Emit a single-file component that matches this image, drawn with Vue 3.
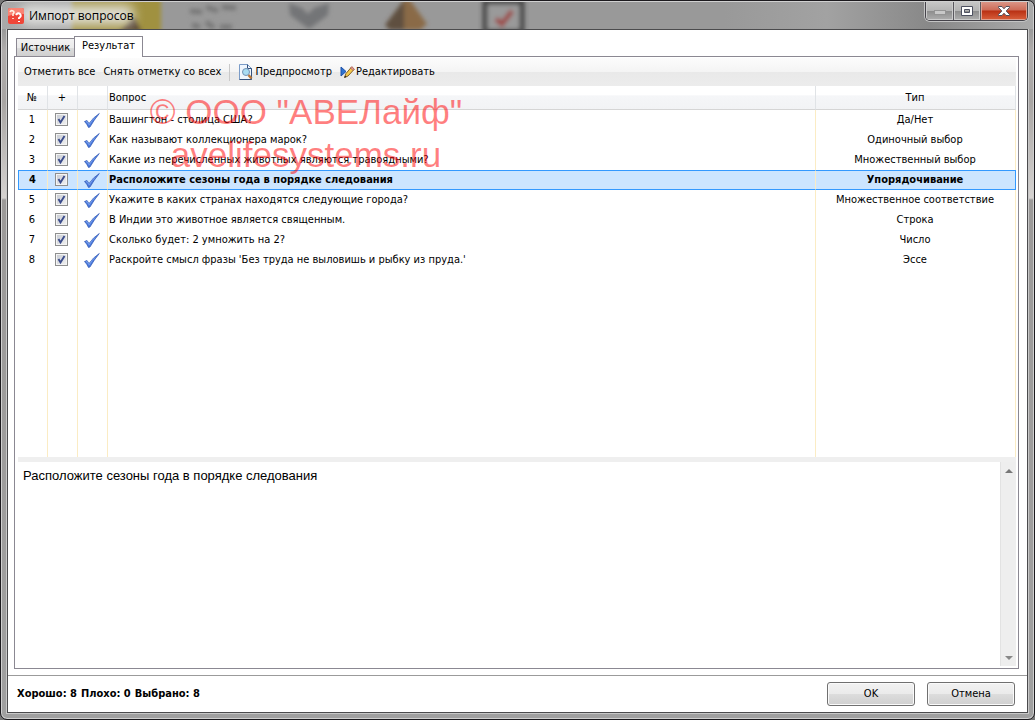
<script setup>
import { ref } from 'vue'

const rows = ref([
  { n: 1, on: true, text: 'Вашингтон - столица США?', type: 'Да/Нет' },
  { n: 2, on: true, text: 'Как называют коллекционера марок?', type: 'Одиночный выбор' },
  { n: 3, on: true, text: 'Какие из перечисленных животных являются травоядными?', type: 'Множественный выбор' },
  { n: 4, on: true, text: 'Расположите сезоны года в порядке следования', type: 'Упорядочивание' },
  { n: 5, on: true, text: 'Укажите в каких странах находятся следующие города?', type: 'Множественное соответствие' },
  { n: 6, on: true, text: 'В Индии это животное является священным.', type: 'Строка' },
  { n: 7, on: true, text: 'Сколько будет: 2 умножить на 2?', type: 'Число' },
  { n: 8, on: true, text: "Раскройте смысл фразы 'Без труда не выловишь и рыбку из пруда.'", type: 'Эссе' },
])
const current = ref(4)
const setAll = (value) => rows.value.forEach((r) => (r.on = value))
const currentText = () => rows.value.find((r) => r.n === current.value).text
</script>

<template>
  <div class="window">
    <header class="titlebar">
      <svg class="glass" width="560" height="27" viewBox="0 0 560 27" aria-hidden="true">
        <defs>
          <filter id="soft" x="-20%" y="-20%" width="140%" height="140%"><feGaussianBlur stdDeviation="2" /></filter>
          <filter id="glow" x="-20%" y="-60%" width="140%" height="220%"><feGaussianBlur stdDeviation="6" /></filter>
        </defs>
        <g filter="url(#soft)">
          <rect x="72" y="-4" width="89" height="36" fill="#a09140" />
          <path d="M118 30 134 14 142 30z" fill="#5c4a34" />
          <path d="M190 9 202 10M206 5 218 9M222 5 236 6M192 23 200 25M206 20 214 26M220 25h12" stroke="#777" stroke-width="5" />
          <path d="M289 1 302 6 308 12 314 6 329 1 328 13 309 27 290 13z" fill="#737577" />
          <path d="M404-2 385 23 390 28 420 28 427 22 410-2z" fill="#8a6b46" />
          <path d="M404-2 385 23 390 28 404 28z" fill="#5e5041" />
          <rect x="485" y="0" width="37" height="30" fill="#9a9a9a" stroke="#474747" stroke-width="5" />
          <path d="M496 17 502 22 512 9" fill="none" stroke="#9c4a47" stroke-width="5" />
        </g>
        <rect x="20" y="3" width="114" height="20" rx="8" fill="#e6e6e4" opacity=".9" filter="url(#glow)" />
      </svg>
      <svg class="logo" width="16" height="16" viewBox="0 0 16 16" aria-hidden="true">
        <rect width="16" height="16" rx="2" fill="#ef4638" />
        <path d="M0 2Q0 0 2 0h12q2 0 2 2v4Q8 5 0 8z" fill="#f98474" />
        <path d="M2 4Q3 2 5 3T5 6v2M5 10v1" fill="none" stroke="#fff0e0" stroke-width="1.6" />
        <path d="M8 7Q10 4 12 6T11 10v1M11 13v1" fill="none" stroke="#fff" stroke-width="2" />
      </svg>
      <h1>Импорт вопросов</h1>
      <div class="captions">
        <button class="cap min" aria-label="Свернуть">
          <svg width="12" height="5" viewBox="0 0 12 5"><rect x=".5" y=".5" width="11" height="4" fill="#c8c8c8" stroke="#949494" /></svg>
        </button>
        <button class="cap max" aria-label="Развернуть">
          <svg width="12" height="10" viewBox="0 0 12 10"><path d="M.5.5h11v9H.5zM3.500 3.500v3h5v-3z" fill="#fff" fill-rule="evenodd" stroke="#4d5060" /></svg>
        </button>
        <button class="cap close" aria-label="Закрыть">
          <svg width="12" height="10" viewBox="0 0 12 10"><path d="M.5.5h3.500L6 2.800 8 .5h3.500v1L8.200 5l3.300 3.500v1H8L6 7.200 4 9.500H.5v-1L3.800 5 .5 1.500z" fill="#fff" stroke="#53505c" /></svg>
        </button>
      </div>
    </header>

    <main class="client">
      <div class="tabs" role="tablist">
        <button class="tab" role="tab" aria-selected="false">Источник</button>
        <button class="tab active" role="tab" aria-selected="true">Результат</button>
      </div>

      <section class="panel">
        <div class="toolbar">
          <button @click="setAll(true)">Отметить все</button>
          <button @click="setAll(false)">Снять отметку со всех</button>
          <span class="sep"></span>
          <button>
            <svg width="16" height="16" viewBox="0 0 16 16" aria-hidden="true">
              <path d="M1.500.5h8l4 4v11h-12z" fill="#f0f6fd" stroke="#7b9cc8" />
              <path d="M9.500.5v4h4v11h-12" fill="none" stroke="#34527e" />
              <circle cx="8" cy="8" r="3.500" fill="#a9dcf2" stroke="#7392b4" />
              <path d="M10.500 11l3 3.500" stroke="#b9783a" stroke-width="2.500" />
            </svg>
            Предпросмотр
          </button>
          <button>
            <svg width="15" height="14" viewBox="0 0 15 14" aria-hidden="true">
              <path d="M1 2v9l5-4.500z" fill="#2f73d0" stroke="#1c50a8" />
              <path d="M4.500 12.500 6 8.500 11.500 2 14 4.500 8 11z" fill="#f5ca4b" stroke="#826026" />
              <path d="M10.500 3 13 5.500l1.300-1.300-2.400-2.700z" fill="#e49a98" stroke="#9a4f3f" stroke-width=".6" />
              <path d="M4.300 12.700 5 10.500l1.500 1.500z" fill="#222" />
            </svg>
            Редактировать
          </button>
        </div>

        <div class="list">
          <table>
            <colgroup><col class="c-s" /><col class="c-s" /><col class="c-s" /><col /><col class="c-t" /></colgroup>
            <thead>
              <tr><th>№</th><th>+</th><th></th><th class="q">Вопрос</th><th>Тип</th></tr>
            </thead>
            <tbody>
              <tr v-for="r in rows" :key="r.n" :class="{ selected: r.n === current }" @click="current = r.n">
                <td>{{ r.n }}</td>
                <td class="tick">
                  <label class="check">
                    <input v-model="r.on" type="checkbox" :aria-label="'Вопрос ' + r.n" />
                    <svg v-if="r.on" width="13" height="13" viewBox="0 0 13 13"><path d="M3.500 6 5.500 9.500 9.500 3" fill="none" stroke="#3b4c8c" stroke-width="1.900" /></svg>
                  </label>
                </td>
                <td>
                  <svg class="ok" width="16" height="16" viewBox="0 0 16 16" aria-hidden="true">
                    <path d="M.5 9.500 3 8.500 5 11.500Q9 5.500 15.300 1.500 10 8 6 15L4.500 15.500Q3 12 .5 9.500z" fill="#4a79dc" stroke="#3159b4" stroke-width=".7" />
                    <path d="M2 10l1-.5 2.200 3.300Q8 8 11 5.500" fill="none" stroke="#86abf0" stroke-width=".8" />
                  </svg>
                </td>
                <td class="q">{{ r.text }}</td>
                <td>{{ r.type }}</td>
              </tr>
              <tr class="rest"><td></td><td></td><td></td><td></td><td></td></tr>
            </tbody>
          </table>
        </div>

        <div class="splitter"></div>

        <div class="detail">
          <textarea readonly aria-label="Текст вопроса" :value="currentText()"></textarea>
          <div class="scroll">
            <button aria-label="Вверх"><svg width="8" height="4" viewBox="0 0 8 4"><path d="M0 4 4 0l4 4z" fill="#777" /></svg></button>
            <button aria-label="Вниз"><svg width="8" height="4" viewBox="0 0 8 4"><path d="M0 0h8L4 4z" fill="#888" /></svg></button>
          </div>
        </div>
      </section>

      <footer>
        <p><span>Хорошо: 8</span><span>Плохо: 0</span><span>Выбрано: 8</span></p>
        <button class="push">OK</button>
        <button class="push">Отмена</button>
      </footer>
    </main>

    <div class="watermark" aria-hidden="true">
      <div>© ООО "АВЕЛайф"</div>
      <div>avelifesystems.ru</div>
    </div>
  </div>
</template>

<style>
body { margin: 0; background: #777; }
</style>

<style scoped>
* { box-sizing: border-box; }
button { font: inherit; color: inherit; padding: 0; margin: 0; border: 0; background: none; }
svg { display: block; flex: none; }
.window {
  position: relative; display: flex; flex-direction: column; height: 100vh; min-height: 420px;
  padding: 0 6px 6px; border: 1px solid #1c1a1e; border-radius: 7px;
  background: linear-gradient(180deg, #999 0, #999 28px, #b0adac 50px, #a8a5a3 100px, #d5d2d0 197px, #9c9a99 199px, #a0a0a0 100%);
  box-shadow: inset 0 0 0 1px #d0d0d0;
  font: 11px/14px Tahoma, "DejaVu Sans Condensed", "DejaVu Sans", sans-serif; color: #000;
}
.titlebar {
  position: relative; display: flex; align-items: center; height: 27px; flex: none; overflow: hidden;
  margin: 1px -5px 0; padding: 0 5px 0 6px; border-radius: 5px 5px 0 0;
  background: linear-gradient(90deg, #a9a9a9 0, #999 160px, #999 70%, #a2a2a2 80%, #888 90%, #aaa 100%);
}
.glass { position: absolute; left: -2px; top: 0; }
.logo { position: relative; }
h1 { position: relative; flex: 1; margin: 0 0 0 5px; font: 12px/16px "Segoe UI", "Open Sans", "Noto Sans", sans-serif; }
.captions {
  position: relative; display: flex; align-self: flex-start; height: 20px; margin-top: -1px;
  border: 1px solid #45434a; border-top: 0; border-radius: 0 0 5px 5px; overflow: hidden; box-shadow: 0 0 0 1px #c4c4c4;
}
.cap { display: flex; justify-content: center; align-items: center; width: 27px; border-left: 1px solid #5a585e; background: linear-gradient(#c8c8c8 0, #b4b4b4 50%, #8c8c8c 52%, #aeaeae 100%); box-shadow: inset 0 0 0 1px #ccc; }
.cap.min { border-left: 0; padding-top: 4px; }
.cap.close { width: 47px; background: linear-gradient(#dc9a8c 0, #cd6b57 48%, #b93013 52%, #d9603c 100%); box-shadow: inset 0 0 0 1px #dfa090; }
.client { display: flex; flex-direction: column; flex: 1; min-height: 0; border: 1px solid #4b4b4d; outline: 1px solid #c8c8c8; background: #fff; }
.tabs { display: flex; align-items: flex-end; height: 26px; flex: none; padding-left: 8px; }
.tab { height: 18px; width: 59px; border: 1px solid #8b8892; border-bottom: 0; background: linear-gradient(#f2f2f2 0, #ebebeb 50%, #dcdcdc 52%, #cfcfcf 100%); }
.tab.active { position: relative; width: 69px; height: 21px; margin: 0 0 -1px -1px; padding-bottom: 2px; background: #fff; }
.panel {
  flex: 1; min-height: 0; margin: 0 8px 6px 6px; padding: 1px 2px 2px 3px; border: 1px solid #8b8892;
  display: grid; grid-template-rows: 28px minmax(190px, 371fr) 5px minmax(60px, 204fr); grid-template-columns: minmax(0, 1fr);
}
.toolbar { display: flex; align-items: center; gap: 8px; padding: 0 6px; white-space: nowrap; background: linear-gradient(#fcfcfc 0, #f4f4f4 50%, #e9e9e9 51%, #ececec 100%); }
.toolbar button { display: flex; align-items: center; gap: 1px; }
.sep { width: 1px; height: 17px; background: #c9c9c9; }
.list { min-height: 0; display: grid; }
table { width: 100%; height: 100%; table-layout: fixed; border-collapse: separate; border-spacing: 0; }
.c-s { width: 30px; }
.c-t { width: 200px; }
th { height: 24px; padding: 0 1px 0 0; font-weight: 400; text-align: center; border-right: 1px solid #e0e3e6; border-bottom: 1px solid #d5d5d5; background: linear-gradient(#fff 0, #fff 40%, #f5f6f8 42%, #f2f3f5 100%); }
td { height: 20px; padding: 0 1px 0 0; text-align: center; border-right: 1px solid #fbecc4; }
.q { text-align: left; padding-left: 1px; white-space: nowrap; overflow: hidden; }
.rest td { height: auto; }
.selected td { background: #cce5ff; font-weight: 700; border-top: 1px solid #3399ff; border-bottom: 1px solid #3399ff; }
.selected td:first-child { border-left: 1px solid #3399ff; }
.selected td:last-child { border-right-color: #3399ff; }
.tick { padding: 0 2px 2px 0; }
.check { position: relative; display: block; width: 13px; height: 13px; margin: 0 auto; }
.check input { appearance: none; display: block; width: 13px; height: 13px; margin: 0; border: 1px solid #8e8f8f; background: linear-gradient(135deg, #c5c9d0, #f3f3f3); box-shadow: inset 0 0 0 1px #f4f4f4; }
.check svg { position: absolute; inset: 0; pointer-events: none; }
.ok { margin: 0 auto; }
.splitter { background: #efefef; }
.detail { display: flex; min-height: 0; }
textarea { flex: 1; min-width: 0; border: 0; outline: 0; resize: none; margin: 0; padding: 6px 5px; font: 13px/16px Arial, "Liberation Sans", sans-serif; color: #000; background: #fff; }
.scroll { display: flex; flex-direction: column; justify-content: space-between; width: 16px; background: #eee; border-left: 1px solid #e2e2e2; }
.scroll button { height: 17px; display: flex; align-items: center; justify-content: center; }
footer { display: flex; align-items: center; gap: 12px; flex: none; height: 37px; padding: 0 12px 0 9px; border-top: 1px solid #9b9b9b; }
footer p { flex: 1; display: flex; gap: 4px; margin: 0; font-weight: 700; }
.push { width: 88px; height: 24px; border: 1px solid #707070; border-radius: 3px; background: linear-gradient(#f2f2f2 0, #ebebeb 48%, #dddddd 50%, #cfcfcf 100%); box-shadow: inset 0 0 0 1px #fafafa; }
.watermark { position: absolute; left: 148px; top: 89px; width: 314px; text-align: center; white-space: nowrap; pointer-events: none; font: 35px/43px Arial, "Liberation Sans", sans-serif; color: rgba(255, 0, 0, .5); }
</style>
